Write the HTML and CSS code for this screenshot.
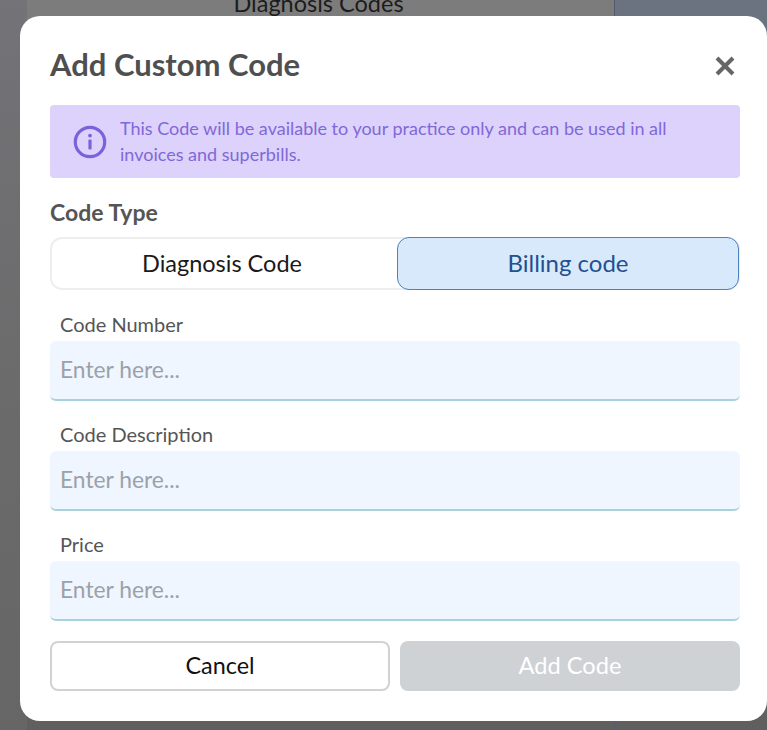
FILE: index.html
```html
<!DOCTYPE html>
<html lang="en">
<head>
<meta charset="utf-8">
<title>Add Custom Code</title>
<link rel="stylesheet" href="styles.css">
</head>
<body>
<div class="backdrop">
  <div class="rail"></div>
  <div class="page"><div class="page-title">Diagnosis Codes</div></div>
  <div class="side"></div>
</div>
<section class="modal">
  <header class="modal-head">
    <h1 class="modal-title">Add Custom Code</h1>
    <svg class="close" viewBox="0 0 20 20" aria-hidden="true"><path d="M2 2 18 18M18 2 2 18"/></svg>
  </header>
  <div class="notice">
    <svg class="notice-icon" viewBox="0 0 34 34" aria-hidden="true">
      <circle class="ring" cx="17" cy="17" r="14.7"/>
      <circle class="dot" cx="17" cy="10.6" r="1.9"/>
      <rect class="dot" x="15.4" y="14.6" width="3.2" height="10" rx="1"/>
    </svg>
    <p class="notice-text">This Code will be available to your practice only and can be used in all invoices and superbills.</p>
  </div>
  <h2 class="type-label">Code Type</h2>
  <div class="toggle">
    <div class="toggle-item">Diagnosis Code</div>
    <div class="toggle-item is-active">Billing code</div>
  </div>
  <div class="field">
    <label class="field-label">Code Number</label>
    <div class="input">Enter here...</div>
  </div>
  <div class="field">
    <label class="field-label">Code Description</label>
    <div class="input">Enter here...</div>
  </div>
  <div class="field">
    <label class="field-label">Price</label>
    <div class="input">Enter here...</div>
  </div>
  <div class="actions">
    <button class="btn btn-cancel">Cancel</button>
    <button class="btn btn-add">Add Code</button>
  </div>
</section>
</body>
</html>
```
FILE: styles.css
```css
* { box-sizing: border-box; }
html, body { margin: 0; height: 100%; }
body {
  width: 767px;
  height: 730px;
  overflow: hidden;
  position: relative;
  font-family: "Lato", "Open Sans", sans-serif;
  background: #5f5f5f;
}
.backdrop { display: flex; height: 730px; background: #5f5f5f; }
.rail { width: 27px; background: linear-gradient(#737378, #6a6a6a 60%, #666); }
.page { width: 588px; background: linear-gradient(#7c7c7c, #7a7a7a 60%, #5f5f5f); border-right: 1px solid #555a6e; }
.page-title { margin-top: -9px; padding-right: 4px; text-align: center; font-size: 23.5px; line-height: 24px; color: #1c1c1c; }
.side { flex: 1; background: linear-gradient(#6b7280, #6b7280 60%, #5f5f5f); }
.modal {
  position: absolute;
  left: 20px;
  top: 16px;
  width: 747px;
  height: 705px;
  padding: 0 27px 0 30px;
  background: #fff;
  border-radius: 20px;
}
.modal-head { display: flex; justify-content: space-between; align-items: center; height: 89px; padding: 6px 5px 0 0; }
.modal-title { margin: 0; font-size: 31px; font-weight: 700; color: #4f4f4f; }
.close { width: 20px; height: 20px; margin-top: 4px; }
.close path { fill: none; stroke: #666; stroke-width: 4; }
.notice {
  display: flex;
  align-items: center;
  gap: 13px;
  height: 73px;
  padding: 0 40px 0 23px;
  background: #dcd2fb;
  border-radius: 4px;
}
.notice-icon { width: 34px; height: 34px; flex: none; }
.ring { fill: none; stroke: #7b62dc; stroke-width: 3.2; }
.dot { fill: #7b62dc; }
.notice-text { margin: 0 0 2px; font-size: 18px; line-height: 26px; color: #8168d8; }
.type-label { margin: 21px 0 0; font-size: 23px; line-height: 26px; font-weight: 700; color: #555; }
.toggle {
  display: flex;
  height: 53px;
  margin-top: 12px;
  border: 2px solid #eeeeee;
  border-radius: 12px;
}
.toggle-item { flex: 1 1 345px; display: flex; align-items: center; justify-content: center; margin: -1px 0; padding: 0 5px 2px 0; font-size: 23.5px; color: #1a1a1a; }
.toggle-item.is-active { flex: 0 0 342px; margin: -2px -1px -2px 0; padding: 0 0 2px; background: #d9e9fc; border: 1px solid #4b82bd; border-radius: 12px; color: #23508f; font-size: 24px; }
.field { margin-top: 21px; }
.toggle + .field { margin-top: 22px; }
.field-label { display: block; padding-left: 10px; font-size: 20px; line-height: 24px; color: #555; }
.input {
  height: 60px;
  margin-top: 5px;
  padding: 0 10px 2px;
  display: flex;
  align-items: center;
  background: #eff6ff;
  border-bottom: 2px solid #a8d3de;
  border-radius: 6px;
  font-size: 22.8px;
  color: #9ba1a8;
}
.actions { display: grid; grid-template-columns: 1fr 1fr; gap: 10px; margin-top: 20px; }
.btn { height: 50px; padding: 0 0 3px; border-radius: 8px; font: inherit; font-size: 23.4px; }
.btn-cancel { background: #fff; border: 2px solid #d2d2d2; color: #111; }
.btn-add { background: #ced2d5; border: 0; color: #fff; font-weight: 400; font-size: 23.6px; }
```
